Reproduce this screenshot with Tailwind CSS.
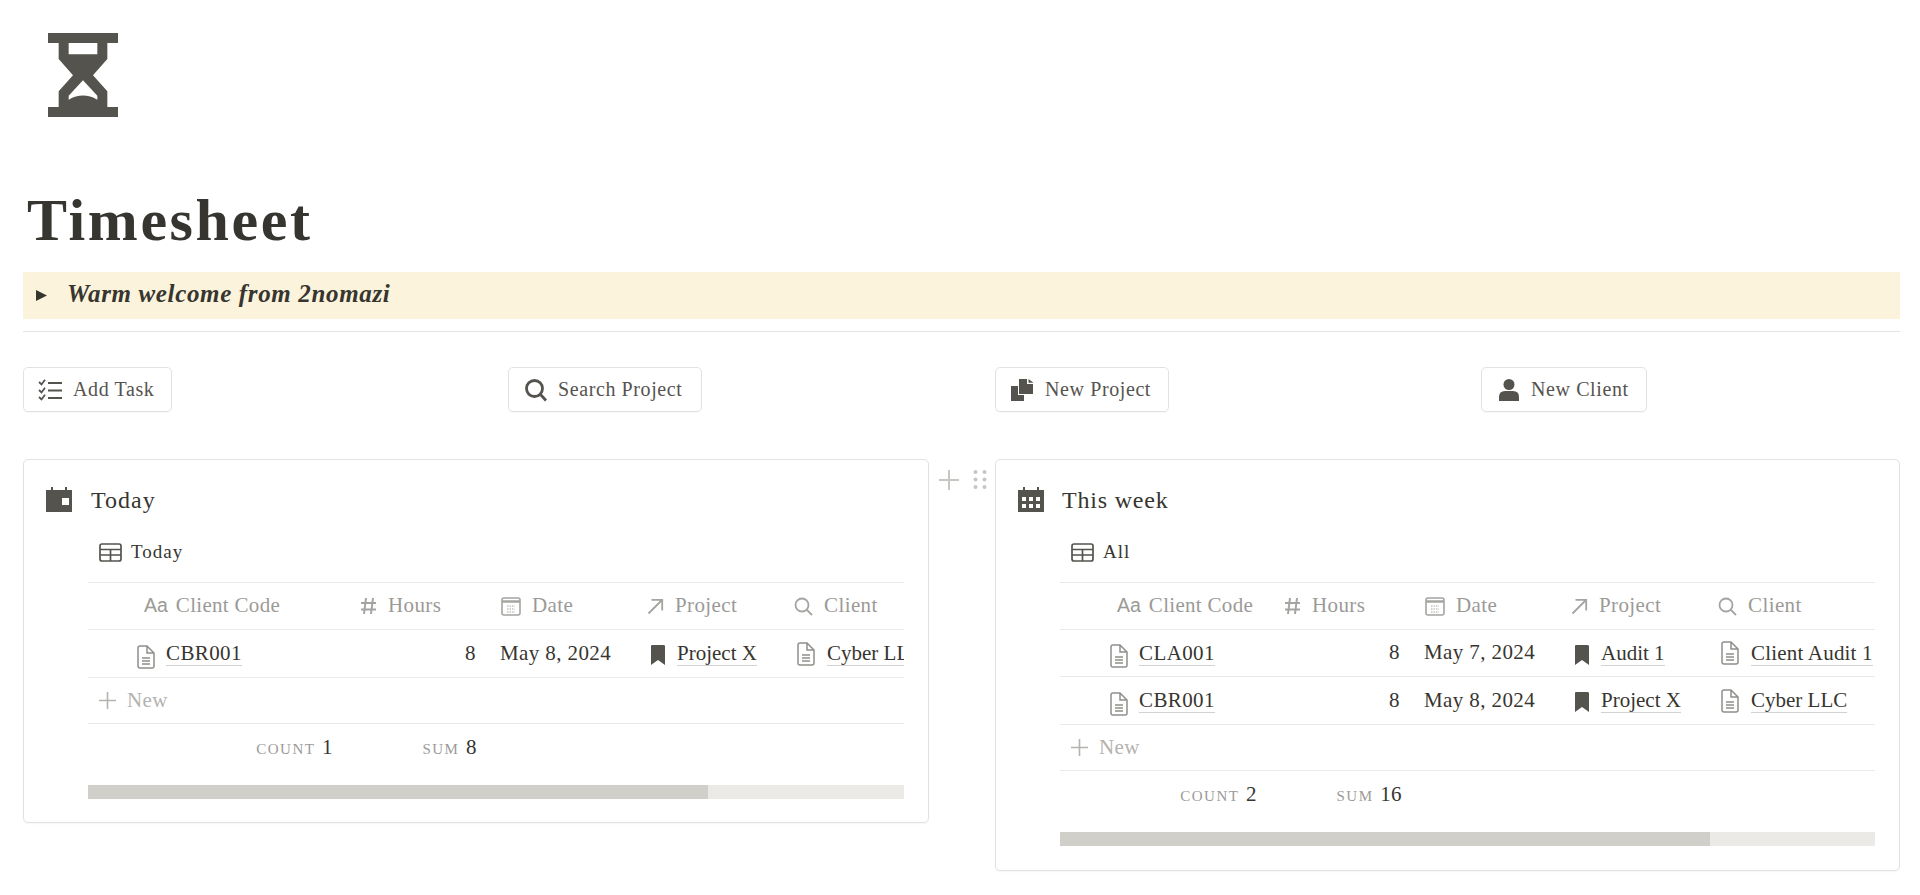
<!DOCTYPE html>
<html><head><meta charset="utf-8"><script src="https://cdn.jsdelivr.net/npm/@tailwindcss/browser@4"></script></head>
<body class="bg-white text-[#37352f] font-['Liberation_Serif',serif] overflow-hidden h-[895px] text-[21px] tracking-[0.4px]">
<div class="pl-[23px] pr-[20px]">
  <div class="pt-[33px] pl-[25px] h-[117px]">
    <svg width="70" height="84" viewBox="0 0 210 252" fill="#55534e"><path fill-rule="evenodd" d="M0 0H210V30H178V78L135 127L178 175V222H210V252H0V222H32V175L75 127L32 78V30H0ZM62 30V64H148V30ZM105 142L62 188V200Q105 175 148 200V188Z"/></svg>
  </div>
  <h1 class="mt-[71px] h-[84px] pl-[4px] text-[60px] leading-[64px] font-bold tracking-[2.6px] text-[#37352f]">Timesheet</h1>

  <div class="h-[47px] bg-[#fbf3db] flex items-center pl-[12px]">
    <svg width="13" height="13" viewBox="0 0 13 13" fill="#37352f"><path d="M1 1L12 6.5L1 12Z"/></svg>
    <span class="ml-[19px] mb-[3px] text-[25px] font-bold italic tracking-[0.65px]">Warm welcome from 2nomazi</span>
  </div>
  <div class="mt-[12px] h-px bg-[#e3e2e0]"></div>

  <div class="mt-[35px] grid grid-cols-[485px_487px_486px_1fr] text-[#55534e]">
    <div><div class="inline-flex items-center h-[45px] w-[149px] pl-[14px] gap-[8px] border border-[#e3e2e0] rounded-[5px] shadow-[0_1px_1px_rgba(0,0,0,0.03)]">
      <svg width="27" height="22" viewBox="0 0 27 22" fill="none" stroke="#55534e"><path d="M1 3l2.5 2.5L7 .8M1 11l2.5 2.5L7 8.8M1 18l2.5 2.5L7 15.8" stroke-width="1.8"/><path d="M10 4H24M10 11.500H24M10 19H24" stroke-width="2.2"/></svg>
      <span class="mb-[2px] text-[20px] tracking-[0.6px]">Add Task</span></div></div>
    <div><div class="inline-flex items-center h-[45px] w-[194px] pl-[15px] gap-[10px] border border-[#e3e2e0] rounded-[5px] shadow-[0_1px_1px_rgba(0,0,0,0.03)]">
      <svg width="24" height="24" viewBox="0 0 24 24" fill="none" stroke="#55534e" stroke-width="2.800"><circle cx="10.500" cy="10.500" r="8"/><path d="M16 16L22 22.500"/></svg>
      <span class="mb-[2px] text-[20px] tracking-[0.6px]">Search Project</span></div></div>
    <div><div class="inline-flex items-center h-[45px] w-[174px] pl-[15px] gap-[10px] border border-[#e3e2e0] rounded-[5px] shadow-[0_1px_1px_rgba(0,0,0,0.03)]">
      <svg width="24" height="24" viewBox="0 0 24 24" fill="#55534e"><path d="M0 8H7V17H13V23H0Z"/><path d="M8 1H16V6H22V16H8Z"/><path d="M17.500 1L22.500 4.800H17.500Z"/></svg>
      <span class="mb-[2px] text-[20px] tracking-[0.6px]">New Project</span></div></div>
    <div><div class="inline-flex items-center h-[45px] w-[166px] pl-[15px] gap-[10px] border border-[#e3e2e0] rounded-[5px] shadow-[0_1px_1px_rgba(0,0,0,0.03)]">
      <svg width="24" height="24" viewBox="0 0 24 24" fill="#55534e"><circle cx="12" cy="6.500" r="5.500"/><path d="M2 23V19Q2 13 8 13H16Q22 13 22 19V23Z"/></svg>
      <span class="mb-[2px] text-[20px] tracking-[0.6px]">New Client</span></div></div>
  </div>

  <div class="mt-[47px] flex items-start">
    <!-- LEFT CARD -->
    <div class="w-[906px] h-[364px] border border-[#e3e2e0] rounded-[5px] shadow-[0_1px_2px_rgba(0,0,0,0.04)] pl-[64px] pr-[24px] relative">
      <div class="h-[122px] relative">
        <div class="absolute left-[-42px] top-[22px] flex items-center gap-[19px]">
          <svg width="26" height="26" viewBox="0 0 26 26" fill="#55534e"><path d="M0 3H5V0H7V3H19V0H21V3H26V25H0ZM16 11V18H23V11Z" fill-rule="evenodd"/></svg>
          <span class="text-[24px] tracking-[1px]">Today</span>
        </div>
        <div class="absolute left-[11px] top-[78px] flex items-center gap-[9px]">
          <svg width="23" height="19" viewBox="0 0 23 19" fill="none" stroke="#55534e" stroke-width="1.700"><rect x="1" y="1" width="21" height="17" rx="2"/><path d="M1 6.500H22M1 12H22M11.500 6.500V18"/></svg>
          <span class="text-[19px] tracking-[1px]">Today</span>
        </div>
      </div>
      <div class="overflow-hidden border-t border-[#e9e9e7]">
        <div class="w-[1000px]">
          <div class="flex h-[47px] items-center border-b border-[#e9e9e7] text-[#9b9a97]">
            <div class="w-[263px] pl-[56px] flex items-center gap-[8px]"><span class="font-['Liberation_Sans',sans-serif] text-[19.500px] tracking-normal">Aa</span><span class="tracking-[0.3px]">Client Code</span></div>
            <div class="w-[141px] pl-[9px] flex items-center gap-[11px]"><svg width="17" height="18" viewBox="0 0 17 18" fill="none" stroke="#a5a4a1" stroke-width="2"><path d="M6 1L4 17M13 1L11 17M1 6H16M1 12.500H16"/></svg><span>Hours</span></div>
            <div class="w-[146px] pl-[9px] flex items-center gap-[11px]"><svg width="20" height="19" viewBox="0 0 20 19" fill="none" stroke="#a5a4a1" stroke-width="1.600"><rect x="1" y="1" width="18" height="17" rx="2"/><path d="M1 4.500H19" stroke-width="2.500"/><path d="M6 9H14M6 12H14M6 15H14" stroke-width="1" stroke-dasharray="1.500 1"/></svg><span>Date</span></div>
            <div class="w-[146px] pl-[9px] flex items-center gap-[11px]"><svg width="17" height="17" viewBox="0 0 17 17" fill="none" stroke="#a5a4a1" stroke-width="1.800"><path d="M1.500 15.500L15 2M4.500 1.800H15.200V12.500"/></svg><span>Project</span></div>
            <div class="w-[146px] pl-[10px] flex items-center gap-[11px]"><svg width="19" height="19" viewBox="0 0 19 19" fill="none" stroke="#a5a4a1" stroke-width="1.800"><circle cx="8" cy="8" r="6.500"/><path d="M12.500 12.500L18 18"/></svg><span>Client</span></div>
          </div>
          <div class="flex h-[48px] items-center border-b border-[#e9e9e7]">
            <div class="w-[263px] pl-[48px] flex items-center gap-[10px]">
              <svg class="mt-[6px]" width="20" height="24" viewBox="0 0 20 24" fill="none" stroke="#908f8b" stroke-width="1.500"><path d="M2 3Q2 1 4 1H11L18 8V21Q18 23 16 23H4Q2 23 2 21ZM11 1V8H18M6 13H14M6 16H14M6 19H14"/></svg>
              <span class="border-b border-[#d3d2cf] leading-[24px]">CBR001</span></div>
            <div class="w-[141px] text-right pr-[16px]">8</div>
            <div class="w-[146px] pl-[8px]">May 8, 2024</div>
            <div class="w-[146px] pl-[11px] flex items-center gap-[10px]">
              <svg class="mt-[3px]" width="18" height="22" viewBox="0 0 18 22" fill="#55534e"><path d="M2 2Q2 1 3 1H14Q16 1 16 2V21L9 16L2 21Z"/></svg>
              <span class="border-b border-[#d3d2cf] leading-[24px] tracking-[0px]">Project X</span></div>
            <div class="w-[200px] pl-[12px] flex items-center gap-[11px]">
              <svg width="20" height="24" viewBox="0 0 20 24" fill="none" stroke="#908f8b" stroke-width="1.500"><path d="M2 3Q2 1 4 1H11L18 8V21Q18 23 16 23H4Q2 23 2 21ZM11 1V8H18M6 13H14M6 16H14M6 19H14"/></svg>
              <span class="border-b border-[#d3d2cf] leading-[24px] tracking-[0px] whitespace-nowrap">Cyber LLC</span></div>
          </div>
          <div class="flex h-[46px] items-center border-b border-[#e9e9e7] pl-[11px] gap-[11px] text-[#b4b3b0]">
            <svg width="17" height="17" viewBox="0 0 17 17" fill="none" stroke="#b4b3b0" stroke-width="1.600"><path d="M8.500 0V17M0 8.500H17"/></svg>
            <span>New</span>
          </div>
          <div class="flex h-[47px] items-center">
            <div class="w-[245px] text-right"><span class="uppercase text-[15px] tracking-[1.5px] text-[#9b9a97]">Count</span> <span class="ml-[1px]">1</span></div>
            <div class="w-[144px] text-right"><span class="uppercase text-[15px] tracking-[1.5px] text-[#9b9a97]">Sum</span> <span class="ml-[1px]">8</span></div>
          </div>
        </div>
      </div>
      <div class="mt-[14px] h-[14px] bg-[#ebeae7]"><div class="w-[76%] h-full bg-[#d0cfc9]"></div></div>
    </div>
    <!-- HANDLES -->
    <div class="w-[66px] h-[40px] pt-[10px] pl-[10px] flex items-start gap-[14px]">
      <svg class="mt-[1px]" width="20" height="20" viewBox="0 0 20 20" fill="none" stroke="#c7c6c3" stroke-width="2"><path d="M10 0V20M0 10H20"/></svg>
      <svg width="14" height="21" viewBox="0 0 14 21" fill="#c7c6c3"><circle cx="2.500" cy="3" r="2"/><circle cx="11.500" cy="3" r="2"/><circle cx="2.500" cy="10.500" r="2"/><circle cx="11.500" cy="10.500" r="2"/><circle cx="2.500" cy="18" r="2"/><circle cx="11.500" cy="18" r="2"/></svg>
    </div>
    <!-- RIGHT CARD -->
    <div class="w-[905px] h-[412px] border border-[#e3e2e0] rounded-[5px] shadow-[0_1px_2px_rgba(0,0,0,0.04)] pl-[64px] pr-[24px] relative">
      <div class="h-[122px] relative">
        <div class="absolute left-[-42px] top-[22px] flex items-center gap-[18px]">
          <svg width="26" height="26" viewBox="0 0 26 26" fill="#55534e"><path fill-rule="evenodd" d="M0 3H5V0H7V3H19V0H21V3H26V25H0ZM4 10V14H8V10ZM11 10V14H15V10ZM18 10V14H22V10ZM4 17V21H8V17ZM11 17V21H15V17ZM18 17V21H22V17Z"/></svg>
          <span class="text-[24px] tracking-[0.8px]">This week</span>
        </div>
        <div class="absolute left-[11px] top-[78px] flex items-center gap-[9px]">
          <svg width="23" height="19" viewBox="0 0 23 19" fill="none" stroke="#55534e" stroke-width="1.700"><rect x="1" y="1" width="21" height="17" rx="2"/><path d="M1 6.500H22M1 12H22M11.500 6.500V18"/></svg>
          <span class="text-[19px] tracking-[1px]">All</span>
        </div>
      </div>
      <div class="overflow-hidden border-t border-[#e9e9e7]">
        <div class="w-[1000px]">
          <div class="flex h-[47px] items-center border-b border-[#e9e9e7] text-[#9b9a97]">
            <div class="w-[215px] pl-[57px] flex items-center gap-[8px]"><span class="font-['Liberation_Sans',sans-serif] text-[19.500px] tracking-normal">Aa</span><span class="tracking-[0.3px]">Client Code</span></div>
            <div class="w-[141px] pl-[9px] flex items-center gap-[11px]"><svg width="17" height="18" viewBox="0 0 17 18" fill="none" stroke="#a5a4a1" stroke-width="2"><path d="M6 1L4 17M13 1L11 17M1 6H16M1 12.500H16"/></svg><span>Hours</span></div>
            <div class="w-[146px] pl-[9px] flex items-center gap-[11px]"><svg width="20" height="19" viewBox="0 0 20 19" fill="none" stroke="#a5a4a1" stroke-width="1.600"><rect x="1" y="1" width="18" height="17" rx="2"/><path d="M1 4.500H19" stroke-width="2.500"/><path d="M6 9H14M6 12H14M6 15H14" stroke-width="1" stroke-dasharray="1.500 1"/></svg><span>Date</span></div>
            <div class="w-[146px] pl-[9px] flex items-center gap-[11px]"><svg width="17" height="17" viewBox="0 0 17 17" fill="none" stroke="#a5a4a1" stroke-width="1.800"><path d="M1.500 15.500L15 2M4.500 1.800H15.200V12.500"/></svg><span>Project</span></div>
            <div class="w-[146px] pl-[10px] flex items-center gap-[11px]"><svg width="19" height="19" viewBox="0 0 19 19" fill="none" stroke="#a5a4a1" stroke-width="1.800"><circle cx="8" cy="8" r="6.500"/><path d="M12.500 12.500L18 18"/></svg><span>Client</span></div>
          </div>
          <div class="flex h-[47px] items-center border-b border-[#e9e9e7]">
            <div class="w-[215px] pl-[49px] flex items-center gap-[10px]">
              <svg class="mt-[6px]" width="20" height="24" viewBox="0 0 20 24" fill="none" stroke="#908f8b" stroke-width="1.500"><path d="M2 3Q2 1 4 1H11L18 8V21Q18 23 16 23H4Q2 23 2 21ZM11 1V8H18M6 13H14M6 16H14M6 19H14"/></svg>
              <span class="border-b border-[#d3d2cf] leading-[24px]">CLA001</span></div>
            <div class="w-[141px] text-right pr-[16px]">8</div>
            <div class="w-[146px] pl-[8px]">May 7, 2024</div>
            <div class="w-[146px] pl-[11px] flex items-center gap-[10px]">
              <svg class="mt-[3px]" width="18" height="22" viewBox="0 0 18 22" fill="#55534e"><path d="M2 2Q2 1 3 1H14Q16 1 16 2V21L9 16L2 21Z"/></svg>
              <span class="border-b border-[#d3d2cf] leading-[24px] tracking-[0px]">Audit 1</span></div>
            <div class="w-[200px] pl-[12px] flex items-center gap-[11px]">
              <svg width="20" height="24" viewBox="0 0 20 24" fill="none" stroke="#908f8b" stroke-width="1.500"><path d="M2 3Q2 1 4 1H11L18 8V21Q18 23 16 23H4Q2 23 2 21ZM11 1V8H18M6 13H14M6 16H14M6 19H14"/></svg>
              <span class="border-b border-[#d3d2cf] leading-[24px] tracking-[0.2px] whitespace-nowrap">Client Audit 1</span></div>
          </div>
          <div class="flex h-[48px] items-center border-b border-[#e9e9e7]">
            <div class="w-[215px] pl-[49px] flex items-center gap-[10px]">
              <svg class="mt-[6px]" width="20" height="24" viewBox="0 0 20 24" fill="none" stroke="#908f8b" stroke-width="1.500"><path d="M2 3Q2 1 4 1H11L18 8V21Q18 23 16 23H4Q2 23 2 21ZM11 1V8H18M6 13H14M6 16H14M6 19H14"/></svg>
              <span class="border-b border-[#d3d2cf] leading-[24px]">CBR001</span></div>
            <div class="w-[141px] text-right pr-[16px]">8</div>
            <div class="w-[146px] pl-[8px]">May 8, 2024</div>
            <div class="w-[146px] pl-[11px] flex items-center gap-[10px]">
              <svg class="mt-[3px]" width="18" height="22" viewBox="0 0 18 22" fill="#55534e"><path d="M2 2Q2 1 3 1H14Q16 1 16 2V21L9 16L2 21Z"/></svg>
              <span class="border-b border-[#d3d2cf] leading-[24px] tracking-[0px]">Project X</span></div>
            <div class="w-[200px] pl-[12px] flex items-center gap-[11px]">
              <svg width="20" height="24" viewBox="0 0 20 24" fill="none" stroke="#908f8b" stroke-width="1.500"><path d="M2 3Q2 1 4 1H11L18 8V21Q18 23 16 23H4Q2 23 2 21ZM11 1V8H18M6 13H14M6 16H14M6 19H14"/></svg>
              <span class="border-b border-[#d3d2cf] leading-[24px] tracking-[0px] whitespace-nowrap">Cyber LLC</span></div>
          </div>
          <div class="flex h-[46px] items-center border-b border-[#e9e9e7] pl-[11px] gap-[11px] text-[#b4b3b0]">
            <svg width="17" height="17" viewBox="0 0 17 17" fill="none" stroke="#b4b3b0" stroke-width="1.600"><path d="M8.500 0V17M0 8.500H17"/></svg>
            <span>New</span>
          </div>
          <div class="flex h-[47px] items-center">
            <div class="w-[197px] text-right"><span class="uppercase text-[15px] tracking-[1.5px] text-[#9b9a97]">Count</span> <span class="ml-[1px]">2</span></div>
            <div class="w-[145px] text-right"><span class="uppercase text-[15px] tracking-[1.5px] text-[#9b9a97]">Sum</span> <span class="ml-[1px]">16</span></div>
          </div>
        </div>
      </div>
      <div class="mt-[14px] h-[14px] bg-[#ebeae7]"><div class="w-[79.800%] h-full bg-[#d0cfc9]"></div></div>
    </div>
  </div>
</div>
</body></html>
